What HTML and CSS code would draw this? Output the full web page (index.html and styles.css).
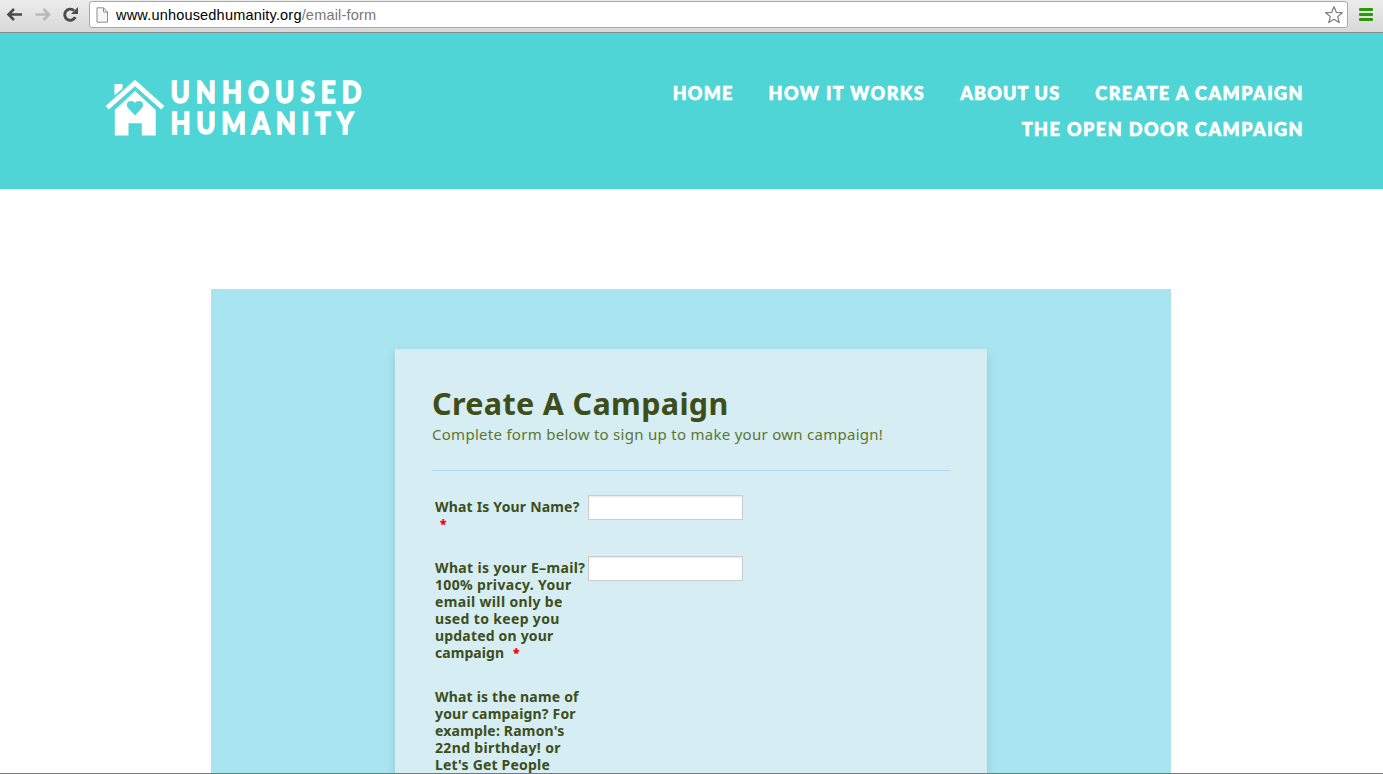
FILE: index.html
```html
<!DOCTYPE html>
<html lang="en">
<head>
<meta charset="utf-8">
<title>Unhoused Humanity</title>
<link rel="stylesheet" href="styles.css">
</head>
<body>
<div class="toolbar">
  <svg class="tools" width="89" height="32" viewBox="0 0 89 32">
    <g fill="none" stroke-width="2.6">
      <path d="M22 14.500H9M14 9L8.500 14.500L14 20" stroke="#4c4c4c"/>
      <path d="M35.500 14.500H48.500M43.500 9L49 14.500L43.500 20" stroke="#b9b9b9"/>
      <path d="M75.300 17.200A5.600 5.600 0 1 1 74 10.500" stroke="#4c4c4c" stroke-width="2.900"/>
    </g>
    <path d="M78 7V14H71Z" fill="#4c4c4c"/>
  </svg>
  <div class="address">
    <svg class="page-icon" width="13" height="16" viewBox="0 0 13 16">
      <path d="M1 .8H7.500L11.500 5V15.200H1Z" fill="#f7f7f7" stroke="#8d8d8d"/>
      <path d="M7.500 .8V5H11.500" fill="none" stroke="#8d8d8d"/>
    </svg>
    <span class="url">www.unhousedhumanity.org<span class="path">/email-form</span></span>
    <svg class="star" width="20" height="20" viewBox="0 0 20 20">
      <path d="M10 1.600L12.300 7.300L18.300 7.700L13.700 11.600L15.200 17.600L10 14.300L4.800 17.600L6.300 11.600L1.700 7.700L7.700 7.300Z" fill="#fff" stroke="#7c7c7c" stroke-width="1.200" stroke-linejoin="round"/>
    </svg>
  </div>
  <div class="menu"><i></i><i></i><i></i></div>
</div>
<header class="header">
  <svg class="logo" width="280" height="70" viewBox="0 0 280 70">
    <path d="M8.500 5H16.500V9.500L8.500 16.500Z" fill="#fff"/>
    <path d="M29 12L49.700 31V56.500H35.800V44.300H22.500V56.500H8.800V31Z" fill="#fff"/>
    <path d="M1.200 28.800L29 4L56.800 28.800" fill="none" stroke="#fff" stroke-width="4.800"/>
    <path d="M29 36.500L22.300 29.300C19.400 25.500 21.500 22 25 22C27 22 28.300 22.700 29 24C29.700 22.700 31 22 33 22C36.500 22 38.600 25.500 35.700 29.300Z" fill="#4fd5d6"/>
    <g class="wordmark" transform="translate(64.500 0) scale(.88 1)">
      <text x="0" y="24.300" textLength="217">UNHOUSED</text>
      <text x="0" y="54.800" textLength="208">HUMANITY</text>
    </g>
  </svg>
  <nav class="nav">
    <div class="nav-row">
      <a class="snug">HOME</a><a>HOW IT WORKS</a><a class="snug">ABOUT US</a><a>CREATE A CAMPAIGN</a>
    </div>
    <div class="nav-row"><a>THE OPEN DOOR CAMPAIGN</a></div>
  </nav>
</header>
<main class="page">
  <section class="band">
    <form class="card">
      <h1>Create A Campaign</h1>
      <p class="sub">Complete form below to sign up to make your own campaign!</p>
      <div class="field">
        <label>What Is Your Name?<br><b>*</b></label>
        <input type="text">
      </div>
      <div class="field">
        <label><span class="loose">What is your E–mail?<br>100% privacy. Your<br>email will only be<br>used to keep you</span><br>updated on your<br><span class="tight">campaign</span> <b>*</b></label>
        <input type="text">
      </div>
      <div class="field">
        <label>What is the name of<br>your campaign? For<br>example: Ramon's<br><span class="loose">22nd birthday! or</span><br>Let's Get People</label>
      </div>
    </form>
  </section>
</main>
</body>
</html>
```
FILE: styles.css
```css
* { box-sizing: border-box; }
body { margin: 0; height: 774px; overflow: hidden; display: flex; flex-direction: column; background: #fff; font-family: "Noto Sans", sans-serif; border-bottom: 1px solid #777; }
.toolbar { flex: none; height: 33px; display: flex; background: linear-gradient(#ececec, #d8d8d8); border-bottom: 1px solid #858b8b; }
.tools { flex: none; }
.address { width: 1259px; height: 27px; margin-top: 1px; display: flex; align-items: center; padding: 0 3px 0 6px; background: #fff; border: 1px solid #a9a9a9; border-radius: 3px; }
.page-icon { flex: none; margin-right: 7px; }
.url { flex: 1; font: 14.500px/24px "Liberation Sans", sans-serif; letter-spacing: .190px; color: #000; white-space: nowrap; }
.path { color: #777; }
.menu { width: 14px; margin: 8px 0 0 11px; display: flex; flex-direction: column; gap: 2px; }
.menu i { height: 3px; border-radius: 1px; background: #2a9a08; }
.header { flex: none; height: 156px; background: #4fd5d6; display: flex; justify-content: space-between; padding: 46px 79px 0 106px; }
.logo { flex: none; overflow: visible; }
.wordmark { font: 900 29.500px Lato, sans-serif; fill: #fff; stroke: #fff; stroke-width: 1.3px; }
.nav { font: 900 18px/36px Lato, sans-serif; color: #fff; -webkit-text-stroke: .7px #fff; letter-spacing: 1.480px; white-space: nowrap; margin-top: -4px; }
.nav-row { display: flex; gap: 35px; justify-content: flex-end; }
.snug { letter-spacing: 1.200px; }
.page { flex: 1; min-height: 0; padding: 100px 212px 0 211px; overflow: hidden; }
.band { height: 600px; background: #a8e5f0; padding: 60px 184px 0; }
.card { height: 600px; background: #d5edf3; box-shadow: 0 4px 9px rgba(0, 0, 0, .13); padding: 34px 37px 0; }
h1 { margin: 0 0 1px; font-size: 30.500px; line-height: 40px; letter-spacing: .340px; color: #3e4e1a; }
.sub { margin: 0; height: 47px; font-size: 15px; line-height: 21px; letter-spacing: .280px; color: #5f762d; border-bottom: 1px solid #a8dfe9; white-space: nowrap; }
.field { display: flex; align-items: flex-start; padding: 24px 3px 0; }
label { width: 153px; font-size: 14px; line-height: 17px; font-weight: bold; letter-spacing: .190px; color: #3e4e1a; white-space: nowrap; padding-top: 3px; }
.loose { letter-spacing: .350px; }
.tight { letter-spacing: .050px; }
label b { color: red; margin-left: 5px; font-size: 12px; line-height: 1; vertical-align: 1px; }
input { width: 155px; height: 25px; margin: 0; border: 1px solid #ccc; background: #fff; box-shadow: inset 0 1px 2px rgba(0, 0, 0, .1); }
```
